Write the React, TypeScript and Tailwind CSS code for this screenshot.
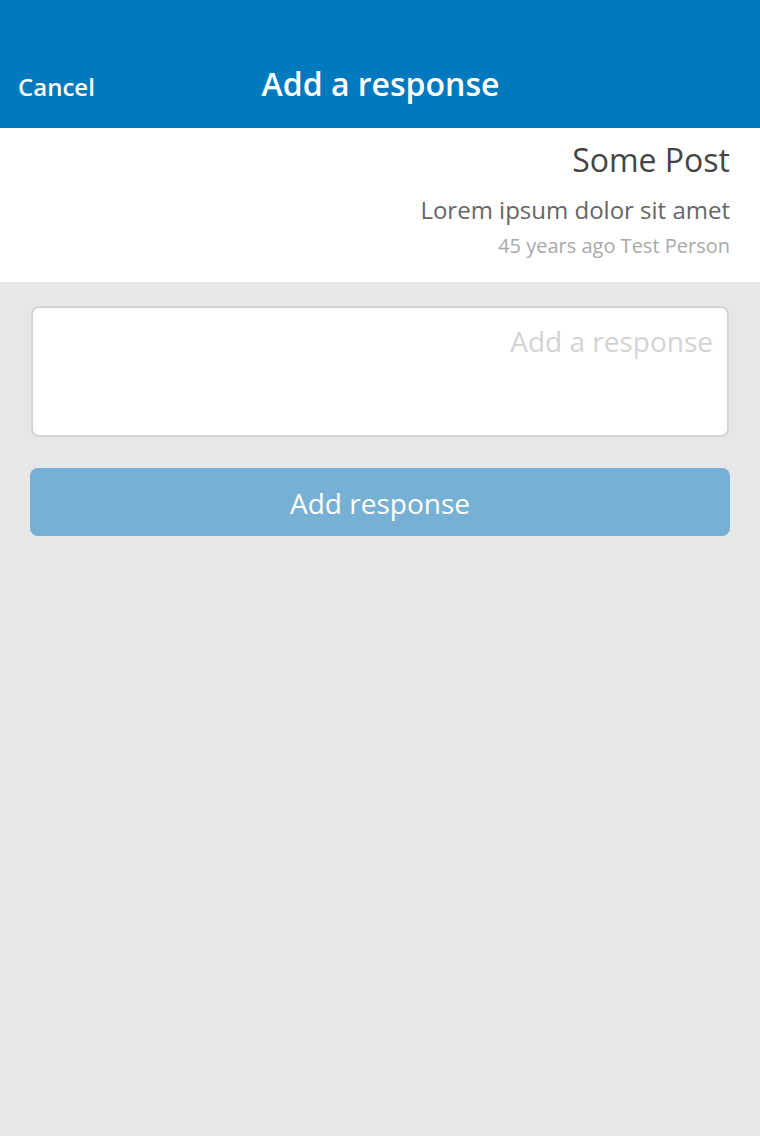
import React from "react";

export default function App() {
  return (
    <div
      className="w-[760px] h-[1136px] bg-[#e7e7e7] flex flex-col"
      style={{ fontFamily: '"Open Sans", sans-serif' }}
    >
      <header className="h-[128px] bg-[#0079be] grid grid-cols-[1fr_auto_1fr] items-baseline pt-[64px] px-[18px]">
        <span className="text-[24px] font-semibold text-white leading-[30px] justify-self-start">
          Cancel
        </span>
        <h1 className="text-[32px] font-semibold text-white leading-[40px] pl-[1px]">
          Add a response
        </h1>
        <span />
      </header>
      <section className="bg-white h-[154px] flex flex-col items-end pr-[30px] pt-[10px]">
        <div className="text-[32px] text-[#454545] leading-[44px]">Some Post</div>
        <div className="mt-[12px] text-[24px] text-[#666666] leading-[32px]">
          Lorem ipsum dolor sit amet
        </div>
        <div className="mt-[6px] text-[20px] text-[#a9a9a9] leading-[28px]">
          45 years ago Test Person
        </div>
      </section>
      <div className="px-[30px] pt-[24px] flex flex-col">
        <textarea
          placeholder="Add a response"
          className="mx-[1px] h-[131px] bg-white border-2 border-[#d4d4d4] rounded-[8px] text-right text-[28px] px-[14px] pt-[15px] resize-none outline-none placeholder:text-[#d3d3d3] leading-[36px]"
        />
        <button className="mt-[31px] h-[68px] bg-[#76b0d4] rounded-[8px] text-white text-[28px] leading-[38px] pt-[2px]">
          Add response
        </button>
      </div>
    </div>
  );
}
